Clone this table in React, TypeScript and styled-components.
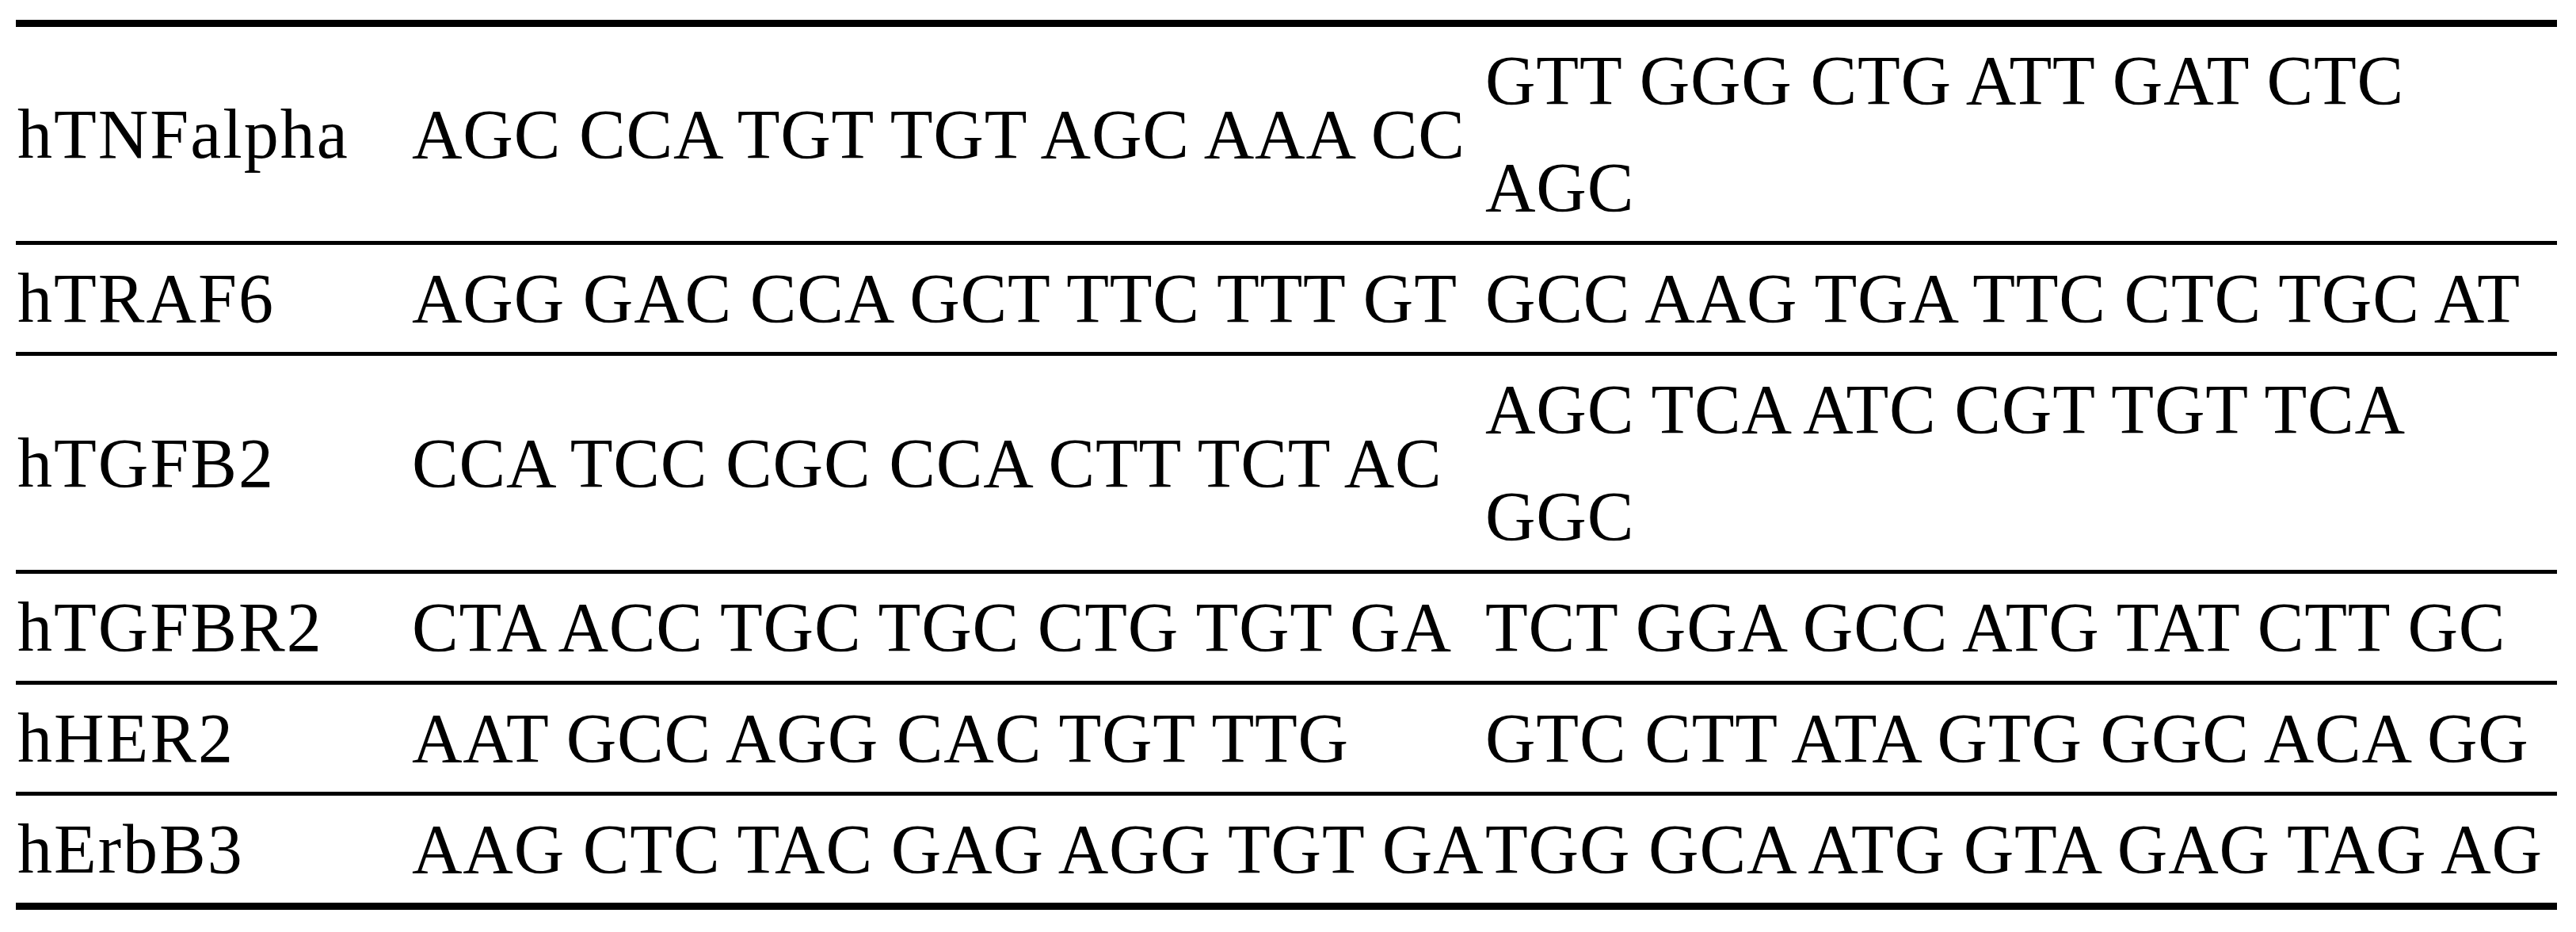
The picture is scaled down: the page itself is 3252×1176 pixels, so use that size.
import React from "react";
import styled, { createGlobalStyle } from "styled-components";

const GlobalStyle = createGlobalStyle`
  html, body {
    margin: 0;
    padding: 0;
    background: #ffffff;
  }
  body {
    font-family: "Liberation Serif", "Times New Roman", serif;
    color: #000000;
  }
`;

const Page = styled.div`
  padding: 25px 0 0 20px;
`;

const Table = styled.table`
  border-collapse: separate;
  border-spacing: 0;
  table-layout: fixed;
  width: 3208px;
  border-top: 9px solid #000;
  border-bottom: 9px solid #000;
  font-family: "Liberation Serif", "Times New Roman", serif;
  font-size: 88px;
  letter-spacing: 0.8px;
  line-height: 135px;
  color: #000;
`;

const Col = styled.col<{ $w: number }>`
  width: ${(p) => p.$w}px;
`;

const Row = styled.tr`
  &:not(:last-child) > td {
    border-bottom: 5px solid #000;
  }
`;

const Cell = styled.td<{ $lead?: boolean; $wrap?: boolean }>`
  padding: 0 0 0 ${(p) => (p.$lead ? 2 : 0)}px;
  vertical-align: middle;
  text-align: left;
  white-space: ${(p) => (p.$wrap ? "normal" : "nowrap")};
`;

const Label = styled.span`
  letter-spacing: 2px;
`;

const rows: [string, string, string][] = [
  ["hTNFalpha", "AGC CCA TGT TGT AGC AAA CC", "GTT GGG CTG ATT GAT CTC AGC"],
  ["hTRAF6", "AGG GAC CCA GCT TTC TTT GT", "GCC AAG TGA TTC CTC TGC AT"],
  ["hTGFB2", "CCA TCC CGC CCA CTT TCT AC", "AGC TCA ATC CGT TGT TCA GGC"],
  ["hTGFBR2", "CTA ACC TGC TGC CTG TGT GA", "TCT GGA GCC ATG TAT CTT GC"],
  ["hHER2", "AAT GCC AGG CAC TGT TTG", "GTC CTT ATA GTG GGC ACA GG"],
  ["hErbB3", "AAG CTC TAC GAG AGG TGT GA", "TGG GCA ATG GTA GAG TAG AG"],
];

export default function App() {
  return (
    <>
      <GlobalStyle />
      <Page>
        <Table>
          <colgroup>
            <Col $w={500} />
            <Col $w={1355} />
            <Col $w={1353} />
          </colgroup>
          <tbody>
            {rows.map(([gene, fwd, rev]) => (
              <Row key={gene}>
                <Cell $lead>
                  <Label>{gene}</Label>
                </Cell>
                <Cell>{fwd}</Cell>
                <Cell $wrap>{rev}</Cell>
              </Row>
            ))}
          </tbody>
        </Table>
      </Page>
    </>
  );
}
